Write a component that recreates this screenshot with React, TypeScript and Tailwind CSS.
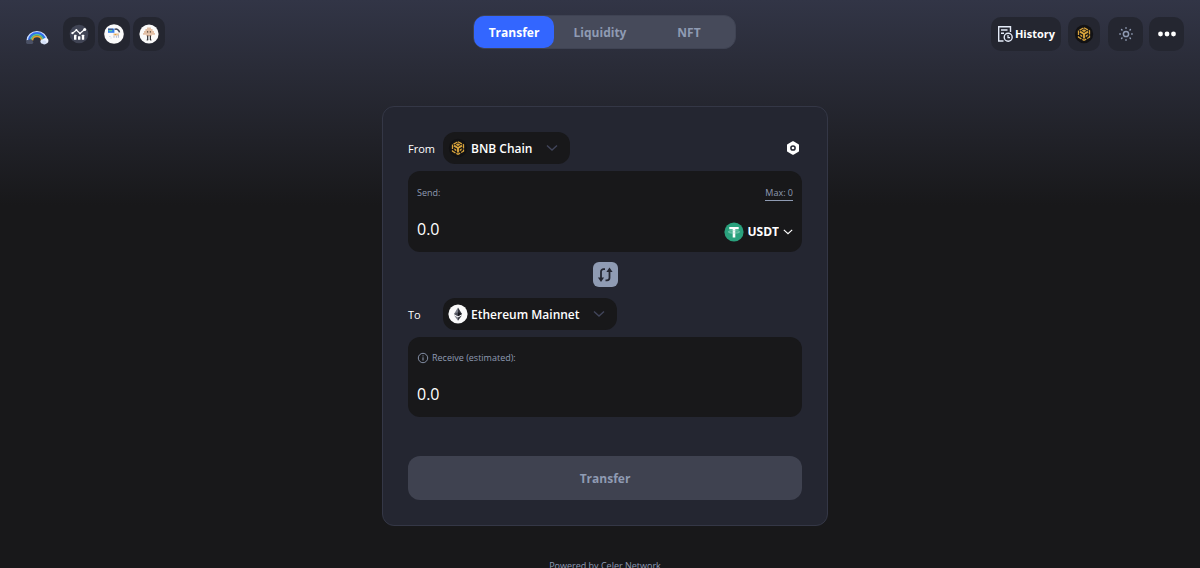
import { ReactNode, useState } from 'react';
import clsx from 'clsx';

const tabs = [
  { label: 'Transfer', width: 'w-20' },
  { label: 'Liquidity', width: 'w-[92px]' },
  { label: 'NFT', width: 'w-[86px]' },
];

function RainbowLogo() {
  return (
    <svg viewBox="0 0 24 16" fill="none" className="h-4 w-6">
      <path d="M2.5 11.5a9.5 8.5 0 0 1 19 0" stroke="#c9dcff" strokeWidth="2" />
      <path d="M4 11.5a8 7.4 0 0 1 16 0" stroke="#2f6bf0" strokeWidth="2" />
      <path d="M5.8 11.5a6.2 5.8 0 0 1 12.4 0" stroke="#4cc3a5" strokeWidth="1.8" />
      <path d="M7.4 11.5a4.6 4.2 0 0 1 9.2 0" stroke="#e0a02c" strokeWidth="1.8" />
      <path d="M1 13.2a2 2 0 0 1 2.4-2 2.3 2.3 0 0 1 4.2 1 1.5 1.5 0 0 1-.6 2.8H2.6A1.8 1.8 0 0 1 1 13.2Z" fill="#4a5064" />
      <circle cx="17.6" cy="12.5" r="2.2" fill="#dfe8fa" />
      <circle cx="20.6" cy="11.8" r="2.8" fill="#eef3ff" />
      <circle cx="19.3" cy="13.4" r="2.1" fill="#d3dff6" />
    </svg>
  );
}

function AnalyticsIcon() {
  return (
    <svg viewBox="0 0 20 20" className="h-5 w-5">
      <circle cx="10" cy="10" r="9.3" fill="#414555" />
      <g fill="#fff">
        <rect x="5" y="10.8" width="2.4" height="5" rx=".4" />
        <rect x="9" y="12.2" width="2.4" height="3.6" rx=".4" />
        <rect x="12.8" y="10.8" width="2.4" height="5" rx=".4" />
      </g>
      <path d="M3.2 9.4 7.4 6l3.6 3.4 4.6-4" stroke="#fff" strokeWidth="1.3" fill="none" />
      <circle cx="3.4" cy="9.2" r="1.1" fill="#fff" />
      <circle cx="7.4" cy="6" r="1" fill="#fff" />
      <circle cx="11" cy="9.4" r="1" fill="#fff" />
      <circle cx="15.7" cy="5.4" r="1.5" fill="#fff" />
    </svg>
  );
}

function DogIcon() {
  return (
    <svg viewBox="0 0 20 20" className="h-5 w-5">
      <circle cx="10" cy="10" r="9.8" fill="#fafafa" />
      <path d="M4 4.6h6.4v4.2H4z" fill="#2f7df0" />
      <path d="M4 4.6h5v1.4H4z" fill="#465a86" />
      <path d="M4.6 6h3.6v1.3H4.6z" fill="#5fcf9a" />
      <path d="M10.6 5.4c2.2-.8 4.400.2 4.900 3" stroke="#3d4254" strokeWidth="1.5" fill="none" />
      <path d="M9.4 9.400h5.600v2.200H9.400z" fill="#e9c9a0" />
      <path d="M10.600 10h1.600v1h-1.600z" fill="#e39a3a" />
      <path d="M10 11.800v2M12.400 11.800v2M14.400 11v2.800" stroke="#a9b3cc" strokeWidth=".9" />
      <path d="M5.400 12h1v1h-1zM6.600 13.600h.8v.8h-.8z" fill="#c4cbdb" />
    </svg>
  );
}

function MushroomIcon() {
  return (
    <svg viewBox="0 0 20 20" className="h-5 w-5">
      <circle cx="10" cy="10" r="9.6" fill="#fafafa" />
      <path d="M8 3.6h4v1.5h1.6v2H15v2h1v1.6H4V9.1h1v-2h1.4v-2H8z" fill="#e3c0a6" />
      <path d="M7.4 10.700h5.200v1.500H7.400z" fill="#dcb497" />
      <path d="M8 7.2h1.200v1.200H8zM10.800 7.200H12v1.200h-1.200z" fill="#4b4038" />
      <path d="M8.700 11.500v4.500M11.400 11.500v4.500" stroke="#2c2c31" strokeWidth="1.200" />
      <path d="M7.600 16h1.600M11 16h1.600" stroke="#2c2c31" strokeWidth=".8" />
    </svg>
  );
}

function BnbIcon() {
  return (
    <svg viewBox="0 0 20 20" className="h-5 w-5">
      <circle cx="10" cy="10" r="9.2" fill="#121214" />
      <path d="m10 3.7 5.500 3.100v6.400L10 16.300l-5.500-3.100V6.800Z" fill="none" stroke="#d9a43c" strokeWidth="1.300" strokeDasharray="4.400 1.100" />
      <path d="M6 7.600 10 10l4-2.400M10 10v4.600" fill="none" stroke="#d9a43c" strokeWidth="1.900" />
      <path d="m10 5.300 2.400 1.400L10 8.100 7.600 6.700Z" fill="#d9a43c" />
      <path d="m6.300 10.300 2 1.200v1.700l-2-1.200ZM13.700 10.300l-2 1.200v1.700l2-1.200Z" fill="#d9a43c" />
    </svg>
  );
}

function EthereumIcon() {
  return (
    <svg viewBox="0 0 20 20" className="h-5 w-5">
      <circle cx="10" cy="10" r="9.6" fill="#fafafa" />
      <path d="M10 3.4v8.900l-4-2.200Z" fill="#7b7e88" />
      <path d="M10 3.4v8.900l4-2.200Z" fill="#34363f" />
      <path d="M10 8.300v4l-4-2.200Z" fill="#4a4d57" />
      <path d="M10 8.300v4l4-2.200Z" fill="#17181d" />
      <path d="M6 11.200 10 13.500v3.300Z" fill="#7b7e88" />
      <path d="M14 11.200 10 13.500v3.300Z" fill="#34363f" />
    </svg>
  );
}

function TetherIcon() {
  return (
    <svg viewBox="0 0 20 20" className="h-5 w-5">
      <circle cx="10" cy="10" r="9.6" fill="#2aa17d" />
      <path d="M5.3 4.9h9.400v2.300h-3.400v8.400H8.700V7.200H5.300Z" fill="#fff" />
      <ellipse cx="10" cy="9.900" rx="5.600" ry="1.200" fill="none" stroke="#a5dccb" strokeWidth=".7" />
    </svg>
  );
}

function HistoryIcon() {
  return (
    <svg viewBox="0 0 16 18" fill="none" stroke="#e4ebf8" strokeWidth="1.4" className="h-[18px] w-4">
      <path d="M6.500 16H1.700V1.700h11.800V7" />
      <path d="M4 5h6.500M4 8.300h3" />
      <circle cx="11.200" cy="12.300" r="4" />
      <path d="M11 10v2.600h2" strokeWidth="1.2" />
    </svg>
  );
}

function SunIcon() {
  return (
    <svg viewBox="0 0 16 16" fill="none" stroke="#8f9bb3" strokeWidth="1.5" strokeLinecap="round" className="h-4 w-4">
      <circle cx="8" cy="8" r="2.600" />
      <path d="M8 1.800v.5M8 13.700v.5M1.800 8h.5M13.700 8h.5M3.600 3.600l.4.400M12 12l.4.400M3.600 12.400l.4-.4M12 4l.4-.4" />
    </svg>
  );
}

function MoreIcon() {
  return (
    <svg viewBox="0 0 20 6" fill="#fff" className="h-1.5 w-5">
      <circle cx="3.5" cy="3" r="2.4" />
      <circle cx="10" cy="3" r="2.4" />
      <circle cx="16.5" cy="3" r="2.4" />
    </svg>
  );
}

function SettingsIcon() {
  return (
    <svg viewBox="0 0 14 14" className="h-3.5 w-3.5">
      <path
        d="M7 1.200 12 4v6l-5 2.800L2 10V4Z"
        fill="#fff"
        stroke="#fff"
        strokeWidth="2"
        strokeLinejoin="round"
      />
      <circle cx="7" cy="7" r="2.100" fill="#fff" stroke="#242631" strokeWidth="1.5" />
    </svg>
  );
}

function SwapIcon() {
  return (
    <svg viewBox="0 0 25 25" fill="none" stroke="#242631" strokeWidth="1.8" className="h-[25px] w-[25px]">
      <path d="M12 7.200h-1.500A2.500 2.500 0 0 0 8 9.700v8" />
      <path d="M4.900 15.500h6.200L8 20Z" fill="#242631" stroke="none" />
      <path d="M12.500 18.300H14a2.500 2.500 0 0 0 2.500-2.500v-8" />
      <path d="M13.400 10h6.200L16.500 5.500Z" fill="#242631" stroke="none" />
    </svg>
  );
}

function InfoIcon() {
  return (
    <svg viewBox="0 0 12 12" fill="none" stroke="#8f9bb3" className="h-3 w-3">
      <circle cx="6" cy="6" r="4.7" strokeWidth=".9" />
      <path d="M6 5.300v3.200M6 3.400v1" />
    </svg>
  );
}

function Chevron({ className }: { className: string }) {
  return (
    <svg viewBox="0 0 12 8" fill="none" stroke="currentColor" strokeWidth="1.4" className={className}>
      <path d="m1 1.500 5 4.500 5-4.500" />
    </svg>
  );
}

interface IconButtonProps {
  label: string;
  className: string;
  children: ReactNode;
}

function IconButton({ label, className, children }: IconButtonProps) {
  return (
    <button
      aria-label={label}
      className={clsx('flex items-center justify-center rounded-[10px] bg-[#242630]', className)}
    >
      {children}
    </button>
  );
}

interface ChainRowProps {
  id: string;
  label: string;
  chain: string;
  icon: ReactNode;
  children?: ReactNode;
}

function ChainRow({ id, label, chain, icon, children }: ChainRowProps) {
  return (
    <div className="flex items-center">
      <label htmlFor={id} className="w-[35px] pt-0.5 text-[11px] text-white">
        {label}
      </label>
      <div className="flex h-8 items-center rounded-xl bg-[#18181a] pr-3 pl-[5px]">
        {icon}
        <select
          id={id}
          className="ml-[3px] field-sizing-content appearance-none bg-transparent pt-0.5 text-xs font-semibold text-white outline-none"
        >
          <option>{chain}</option>
        </select>
        <Chevron className="ml-[13px] h-2 w-3 text-[#41455a]" />
      </div>
      {children}
    </div>
  );
}

export default function App() {
  const [activeTab, setActiveTab] = useState('Transfer');
  const [amount, setAmount] = useState('0.0');

  return (
    <div className="min-h-screen bg-[#18181a] bg-[linear-gradient(#323546,#18181a_205px)] font-['Open_Sans','Noto_Sans',sans-serif]">
      <header className="grid grid-cols-[1fr_auto_1fr] items-start pt-[15px] pr-4 pl-[25px]">
        <div className="flex items-center gap-[3px] pt-0.5">
          <a href="#" aria-label="Home" className="mr-[11px] pt-1.5">
            <RainbowLogo />
          </a>
          <IconButton label="Analytics" className="h-[34px] w-8">
            <AnalyticsIcon />
          </IconButton>
          <IconButton label="Partner" className="h-[34px] w-8">
            <DogIcon />
          </IconButton>
          <IconButton label="Community" className="h-[34px] w-8">
            <MushroomIcon />
          </IconButton>
        </div>

        <nav className="flex rounded-xl border border-[#3f4353] bg-[#464a5a] pr-[3px]">
          {tabs.map((tab) => (
            <button
              key={tab.label}
              onClick={() => setActiveTab(tab.label)}
              className={clsx(
                'h-8 rounded-[10px] pt-0.5 text-xs font-bold',
                tab.width,
                activeTab === tab.label ? 'bg-[#3366ff] text-white' : 'text-[#8f9bb3]'
              )}
            >
              {tab.label}
            </button>
          ))}
        </nav>

        <div className="flex justify-end pt-0.5">
          <button className="flex h-[34px] w-[70px] items-center justify-center gap-0.5 rounded-[10px] bg-[#242630] text-[11px] font-bold text-white">
            <HistoryIcon />
            History
          </button>
          <IconButton label="Network" className="ml-[7px] h-[34px] w-8">
            <BnbIcon />
          </IconButton>
          <IconButton label="Toggle theme" className="ml-2 h-[34px] w-[35px]">
            <SunIcon />
          </IconButton>
          <IconButton label="More" className="ml-1.5 h-[34px] w-[35px]">
            <MoreIcon />
          </IconButton>
        </div>
      </header>

      <main className="flex flex-col items-center pt-[55px] pl-[10px]">
        <section className="flex w-full max-w-[446px] flex-col rounded-xl border border-[#343746] bg-[#242631] p-[25px]">
          <ChainRow id="from-chain" label="From" chain="BNB Chain" icon={<BnbIcon />}>
            <button aria-label="Settings" className="mr-0.5 ml-auto">
              <SettingsIcon />
            </button>
          </ChainRow>

          <div className="mt-[7px] flex h-[81px] justify-between rounded-xl bg-[#18181a] px-[9px] pt-3.5">
            <div className="flex flex-col">
              <label htmlFor="send-amount" className="text-[9px] leading-4 font-medium text-[#8f9bb3]">
                Send:
              </label>
              <input
                id="send-amount"
                value={amount}
                onChange={(e) => setAmount(e.target.value)}
                className="mt-4 h-6 w-40 bg-transparent text-base text-white outline-none"
              />
            </div>
            <div className="flex flex-col items-end">
              <button className="border-b border-[#8f9bb3] text-[9px] leading-[15px] text-[#8f9bb3]">
                Max: 0
              </button>
              <div className="mt-[21px] flex items-center">
                <TetherIcon />
                <select
                  aria-label="Token"
                  className="mr-1 ml-[3px] field-sizing-content appearance-none bg-transparent text-xs font-bold text-white outline-none"
                >
                  <option>USDT</option>
                </select>
                <Chevron className="h-2 w-2.5 text-white" />
              </div>
            </div>
          </div>

          <button
            aria-label="Swap direction"
            className="mt-2.5 mb-[11px] self-center rounded-md bg-[#8f9bb3]"
          >
            <SwapIcon />
          </button>

          <ChainRow id="to-chain" label="To" chain="Ethereum Mainnet" icon={<EthereumIcon />} />

          <div className="mt-[7px] flex h-20 flex-col rounded-xl bg-[#18181a] px-[9px] pt-[13px]">
            <label htmlFor="receive-amount" className="flex items-center gap-[3px] text-[9px] leading-4 font-medium text-[#8f9bb3]">
              <InfoIcon />
              Receive (estimated):
            </label>
            <input
              id="receive-amount"
              value={amount}
              readOnly
              className="mt-4 h-6 w-40 bg-transparent text-base text-white outline-none"
            />
          </div>

          <button className="mt-[39px] h-11 rounded-xl bg-[#3f4250] pt-0.5 text-xs font-bold text-[#8f9bb3]">
            Transfer
          </button>
        </section>

        <footer className="mt-8 text-[9px] leading-4 text-[#8f9bb3]">Powered by Celer Network</footer>
      </main>
    </div>
  );
}
